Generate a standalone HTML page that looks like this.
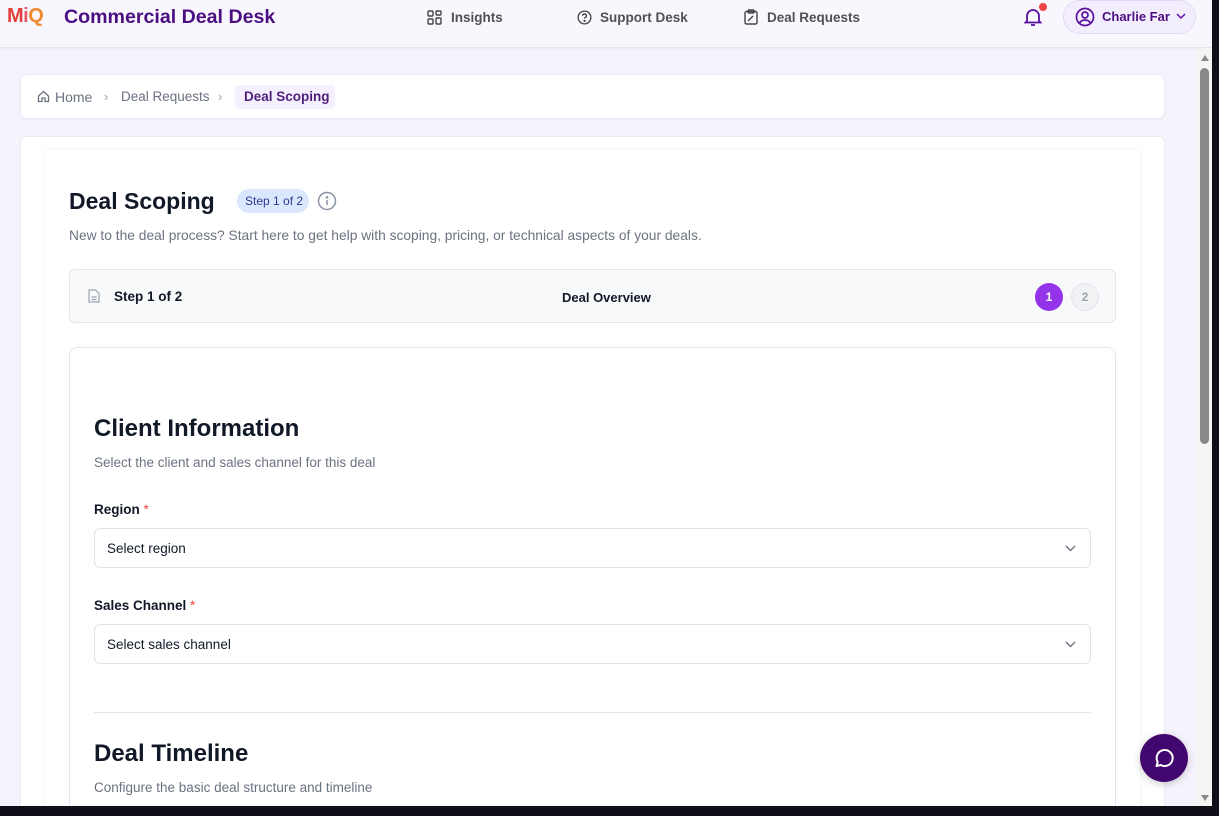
<!DOCTYPE html>
<html><head><meta charset="utf-8"><style>
*{box-sizing:border-box;margin:0;padding:0}
body{width:1219px;height:816px;overflow:hidden;background:#0f0f17;font-family:"Liberation Sans",sans-serif;position:relative}
#vp{position:absolute;left:0;top:0;width:1212px;height:806px;background:#f6f3fd;overflow:hidden}
#hdr{position:absolute;left:0;top:0;width:1212px;height:48px;background:#f9f7fe;border-bottom:1px solid #e8e4f0;box-shadow:0 1px 3px rgba(0,0,0,.05)}
.t{position:absolute;white-space:nowrap}
#sb{position:absolute;left:1198px;top:48px;width:14px;height:758px;background:#f4f4f4}
.card{position:absolute;background:#fff;border-radius:6px}
</style></head><body>
<div id="vp">
<div id="hdr">
 <div class="t" style="left:7px;top:5px;font-size:20px;font-weight:bold;color:#e0403a;letter-spacing:-0.5px">M<span style="color:#e85a6a">i</span><span style="color:#f08a30">Q</span></div>
 <div class="t" style="left:64px;top:6px;font-size:19.6px;font-weight:bold;color:#4b0f82">Commercial Deal Desk</div>
 <svg class="t" style="left:427px;top:10px" width="15" height="15" viewBox="0 0 15 15" fill="none" stroke="#444" stroke-width="1.4"><rect x="1" y="1" width="5" height="5" rx="1"/><rect x="9" y="1" width="5" height="4" rx="1"/><rect x="1" y="9" width="5" height="5" rx="1"/><rect x="9" y="8" width="5" height="6" rx="1"/></svg>
 <div class="t" style="left:451px;top:10px;font-size:13.5px;color:#333;font-weight:bold;opacity:.85">Insights</div>
 <svg class="t" style="left:577px;top:10px" width="15" height="15" viewBox="0 0 16 16" fill="none" stroke="#444" stroke-width="1.4"><circle cx="8" cy="8" r="6.8"/><path d="M6 6.2a2 2 0 1 1 2.6 1.9c-.5.2-.6.6-.6 1.1"/><circle cx="8" cy="11.6" r=".5" fill="#444"/></svg>
 <div class="t" style="left:600px;top:10px;font-size:13.5px;color:#333;font-weight:bold;opacity:.85">Support Desk</div>
 <svg class="t" style="left:744px;top:9px" width="14" height="16" viewBox="0 0 14 16" fill="none" stroke="#444" stroke-width="1.4"><rect x="1" y="2.5" width="12" height="12.5" rx="1.5"/><rect x="4" y="1" width="6" height="3" rx="1"/><path d="M4 12l5-5"/></svg>
 <div class="t" style="left:767px;top:10px;font-size:13.5px;color:#333;font-weight:bold;opacity:.85">Deal Requests</div>
 <svg class="t" style="left:1024px;top:7px" width="18" height="20" viewBox="0 0 18 20" fill="none" stroke="#5a0fa0" stroke-width="1.8"><path d="M3 14V9a6 6 0 0 1 12 0v5l1.5 1.5h-15z"/><path d="M7 18h4"/></svg>
 <div class="t" style="left:1039px;top:3px;width:8px;height:8px;border-radius:50%;background:#ef4444"></div>
 <div class="t" style="left:1063px;top:0;width:133px;height:34px;border-radius:17px;background:#f3eefd;border:1px solid #e3d8f7"></div>
 <svg class="t" style="left:1075px;top:7px" width="20" height="20" viewBox="0 0 20 20" fill="none" stroke="#5a0fa0" stroke-width="1.7"><circle cx="10" cy="10" r="8.5"/><circle cx="10" cy="8" r="3"/><path d="M4.5 16a6.5 6.5 0 0 1 11 0"/></svg>
 <div class="t" style="left:1102px;top:9px;font-size:13px;font-weight:bold;color:#4b0f82">Charlie Far</div>
 <svg class="t" style="left:1176px;top:13px" width="10" height="7" viewBox="0 0 10 7" fill="none" stroke="#5a0fa0" stroke-width="1.5"><path d="M1 1l4 4 4-4"/></svg>
</div>

<div class="card" style="left:20px;top:74px;width:1145px;height:45px;border:1px solid #ece8f5;box-shadow:0 1px 2px rgba(0,0,0,.04)"></div>
<svg class="t" style="left:37px;top:90px" width="13" height="13" viewBox="0 0 13 13" fill="none" stroke="#6b7280" stroke-width="1.3"><path d="M1.5 6L6.5 1.5 11.5 6v5.5h-3.5V8h-3v3.5H1.5z"/></svg>
<div class="t" style="left:55px;top:89px;font-size:14px;color:#6b7280">Home</div>
<div class="t" style="left:104px;top:89px;font-size:13px;color:#9ca3af">›</div>
<div class="t" style="left:121px;top:89px;font-size:13.5px;color:#6b7280">Deal Requests</div>
<div class="t" style="left:218px;top:89px;font-size:13px;color:#9ca3af">›</div>
<div class="t" style="left:235px;top:85px;width:100px;height:24px;background:#f5f0fd;border-radius:4px"></div>
<div class="t" style="left:244px;top:89px;font-size:13.5px;color:#3d0a6e;font-weight:bold;opacity:.9">Deal Scoping</div>

<div class="card" style="left:20px;top:136px;width:1145px;height:700px;border:1px solid #ece8f5"></div>
<div class="card" style="left:45px;top:150px;width:1095px;height:700px;box-shadow:0 0 6px rgba(0,0,0,.06);border-radius:0"></div>

<div class="t" style="left:69px;top:188px;font-size:23px;font-weight:bold;color:#111827">Deal Scoping</div>
<div class="t" style="left:237px;top:189px;width:72px;height:24px;border-radius:12px;background:#dbe7fd"></div>
<div class="t" style="left:245px;top:194px;font-size:12px;color:#2d3a8c">Step 1 of 2</div>
<svg class="t" style="left:317px;top:191px" width="20" height="20" viewBox="0 0 20 20" fill="none" stroke="#8a93a6" stroke-width="1.5"><circle cx="10" cy="10" r="8.5"/><path d="M10 9v5"/><circle cx="10" cy="6.3" r=".6" fill="#8a93a6"/></svg>
<div class="t" style="left:69px;top:228px;font-size:13.8px;color:#6b7280">New to the deal process? Start here to get help with scoping, pricing, or technical aspects of your deals.</div>

<div class="t" style="left:69px;top:269px;width:1047px;height:54px;background:#f8f9fb;border:1px solid #e3e5ea;border-radius:6px"></div>
<svg class="t" style="left:88px;top:289px" width="12" height="14" viewBox="0 0 12 14" fill="none" stroke="#9ca3af" stroke-width="1.2"><path d="M1 1h6.5L11 4.5V13H1z"/><path d="M3.5 8h5M3.5 10.5h5"/></svg>
<div class="t" style="left:114px;top:289px;font-size:13.5px;font-weight:bold;color:#111827">Step 1 of 2</div>
<div class="t" style="left:562px;top:290px;font-size:13px;font-weight:bold;color:#111827">Deal Overview</div>
<div class="t" style="left:1035px;top:283px;width:28px;height:28px;border-radius:50%;background:#9333ea;color:#fff;font-size:12px;font-weight:bold;text-align:center;line-height:28px">1</div>
<div class="t" style="left:1071px;top:283px;width:28px;height:28px;border-radius:50%;background:#f1f2f4;border:1px solid #e3e5ea;color:#9ca3af;font-size:12px;font-weight:bold;text-align:center;line-height:26px">2</div>

<div class="t" style="left:69px;top:347px;width:1047px;height:500px;background:#fff;border:1px solid #e3e5ea;border-radius:8px"></div>
<div class="t" style="left:94px;top:415px;font-size:24px;font-weight:bold;color:#111827">Client Information</div>
<div class="t" style="left:94px;top:455px;font-size:13.5px;color:#6b7280">Select the client and sales channel for this deal</div>
<div class="t" style="left:94px;top:502px;font-size:13.5px;font-weight:bold;color:#111827">Region <span style="color:#ef4444;font-weight:normal">*</span></div>
<div class="t" style="left:94px;top:528px;width:997px;height:40px;border:1px solid #dfe2e7;border-radius:6px"></div>
<div class="t" style="left:107px;top:541px;font-size:13.5px;color:#111827">Select region</div>
<svg class="t" style="left:1065px;top:545px" width="11" height="7" viewBox="0 0 11 7" fill="none" stroke="#6b7280" stroke-width="1.4"><path d="M1 1l4.5 4.5L10 1"/></svg>
<div class="t" style="left:94px;top:598px;font-size:13.5px;font-weight:bold;color:#111827">Sales Channel <span style="color:#ef4444;font-weight:normal">*</span></div>
<div class="t" style="left:94px;top:624px;width:997px;height:40px;border:1px solid #dfe2e7;border-radius:6px"></div>
<div class="t" style="left:107px;top:637px;font-size:13.5px;color:#111827">Select sales channel</div>
<svg class="t" style="left:1065px;top:641px" width="11" height="7" viewBox="0 0 11 7" fill="none" stroke="#6b7280" stroke-width="1.4"><path d="M1 1l4.5 4.5L10 1"/></svg>
<div class="t" style="left:94px;top:712px;width:997px;height:1px;background:#e5e7eb"></div>
<div class="t" style="left:94px;top:740px;font-size:24px;font-weight:bold;color:#111827">Deal Timeline</div>
<div class="t" style="left:94px;top:780px;font-size:13.5px;color:#6b7280">Configure the basic deal structure and timeline</div>

<div class="t" style="left:1140px;top:734px;width:48px;height:48px;border-radius:50%;background:#42076e;box-shadow:0 2px 8px rgba(0,0,0,.2)"></div>
<svg class="t" style="left:1152px;top:746px" width="24" height="24" viewBox="0 0 24 24" fill="none" stroke="#fff" stroke-width="2"><path d="M4.5 20l1.2-4a8 8 0 1 1 3 3z" stroke-linejoin="round"/></svg>

<div id="sb"></div>
<svg class="t" style="left:1200px;top:54px" width="10" height="8" viewBox="0 0 10 8"><path d="M1 7h8L5 1z" fill="#888"/></svg>
<div class="t" style="left:1200px;top:68px;width:9px;height:376px;border-radius:5px;background:#888"></div>
<svg class="t" style="left:1200px;top:794px" width="10" height="8" viewBox="0 0 10 8"><path d="M1 1h8L5 7z" fill="#888"/></svg>
</div>
</body></html>
